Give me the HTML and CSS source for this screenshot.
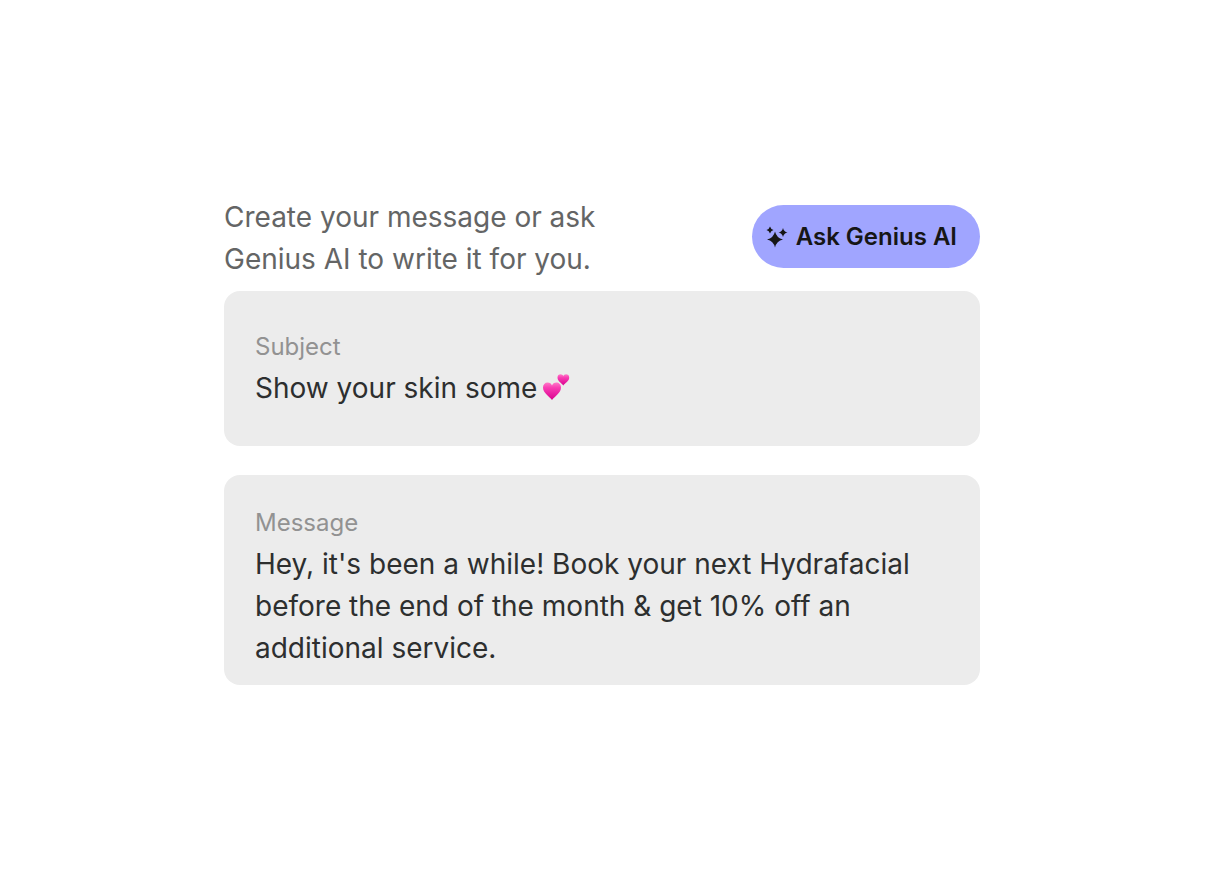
FILE: index.html
```html
<!DOCTYPE html>
<html lang="en">
<head>
    <meta charset="UTF-8">
    <meta name="viewport" content="width=device-width, initial-scale=1.0">
    <title>Create Message</title>
    <link rel="stylesheet" href="styles.css">
</head>
<body>
    <form class="composer">
        <div class="composer-header">
            <p class="intro">Create your message or ask Genius AI to write it for you.</p>
            <button type="button" class="genius-button">
                <svg class="sparkle-icon" width="22" height="22" viewBox="0 0 22 22" fill="currentColor" aria-hidden="true">
                    <path d="M9 5.5Q10.500 12 17 13.500Q10.500 15 9 21.500Q7.500 15 1 13.500Q7.500 12 9 5.500Z"></path>
                    <path d="M17 2Q17.900 5.600 21.500 6.500Q17.900 7.400 17 11Q16.100 7.400 12.500 6.500Q16.100 5.600 17 2Z"></path>
                    <path d="M4 0.500Q4.800 3.200 7.500 4Q4.800 4.800 4 7.500Q3.200 4.800 0.500 4Q3.200 3.200 4 0.500Z"></path>
                </svg>
                Ask Genius AI
            </button>
        </div>

        <div class="field field-subject">
            <label class="field-label" for="subject">Subject</label>
            <div class="subject-row">
                <input type="text" class="field-input" id="subject" value="Show your skin some">
                <svg class="hearts-icon" width="28" height="28" viewBox="0 0 28 28" role="img" aria-label="Two hearts">
                    <defs>
                        <linearGradient id="heart-fill" x1="0" y1="0" x2="0" y2="1">
                            <stop offset="0" stop-color="#ff7ac8"></stop>
                            <stop offset="0.3" stop-color="#f93db3"></stop>
                            <stop offset="1" stop-color="#d9008f"></stop>
                        </linearGradient>
                    </defs>
                    <path fill="url(#heart-fill)" d="M10 26C7 22 1 19 1 13.500C1 10.500 3 8.500 5.600 8.500C7.800 8.500 9.300 9.700 10 11.500C10.700 9.700 12.200 8.500 14.400 8.500C17 8.500 19 10.500 19 13.500C19 19 13 22 10 26Z"></path>
                    <path fill="url(#heart-fill)" d="M21.300 11.500C19.500 8.700 15.500 7.500 15.500 3.500C15.500 1.500 16.800 0.300 18.500 0.300C19.900 0.300 20.900 1 21.300 2.200C21.700 1 22.700 0.300 24.100 0.300C25.800 0.300 27.200 1.500 27.200 3.500C27.200 7.500 23.100 8.700 21.300 11.500Z"></path>
                </svg>
            </div>
        </div>

        <div class="field field-message">
            <label class="field-label" for="message">Message</label>
            <textarea class="field-input" id="message" rows="3">Hey, it's been a while! Book your next Hydrafacial before the end of the month &amp; get 10% off an additional service.</textarea>
        </div>
    </form>
</body>
</html>
```

FILE: styles.css
```css
* {
    margin: 0;
    padding: 0;
    box-sizing: border-box;
}

body {
    font-family: 'Inter', sans-serif;
    background: #ffffff;
    color: #2d2f2f;
    padding: 196px 228px 40px 224px;
}

.composer-header {
    display: flex;
    align-items: flex-start;
    justify-content: space-between;
    margin-bottom: 11px;
}

.intro {
    max-width: 400px;
    font-size: 28px;
    line-height: 42px;
    color: #646565;
}

.genius-button {
    display: flex;
    align-items: center;
    gap: 8px;
    flex-shrink: 0;
    height: 63px;
    margin-top: 9px;
    padding: 0 23px 0 14px;
    border: none;
    border-radius: 32px;
    background: #a0a5ff;
    color: #161616;
    font-family: inherit;
    font-size: 24px;
    font-weight: 600;
    cursor: pointer;
}

.field {
    padding: 32px 31px;
    border-radius: 16px;
    background: #ececec;
}

.field-subject {
    padding-top: 40px;
    padding-bottom: 37px;
    margin-bottom: 29px;
}

.field-message {
    padding-bottom: 16px;
}

.field-label {
    display: block;
    margin-bottom: 4px;
    font-size: 24px;
    line-height: 32px;
    color: #929292;
}

.field-input {
    display: block;
    width: 100%;
    border: none;
    outline: none;
    background: transparent;
    color: inherit;
    font-family: inherit;
    font-size: 28px;
    line-height: 42px;
    resize: none;
    overflow: hidden;
}

.subject-row {
    display: flex;
    align-items: center;
    gap: 5px;
}

.subject-row .field-input {
    width: auto;
    height: 42px;
    field-sizing: content;
}

.hearts-icon {
    flex-shrink: 0;
}
```
